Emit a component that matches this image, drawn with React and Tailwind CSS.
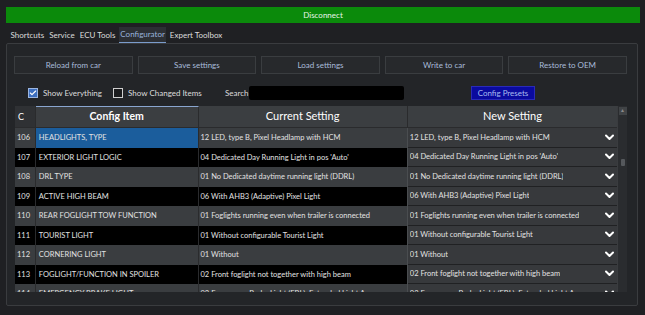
import React from 'react';
import { Check } from 'lucide-react';

const rows = [
  ['106', 'HEADLIGHTS, TYPE', '12 LED, type B, Pixel Headlamp with HCM'],
  ['107', 'EXTERIOR LIGHT LOGIC', "04 Dedicated Day Running Light in pos 'Auto'"],
  ['108', 'DRL TYPE', '01 No Dedicated daytime running light (DDRL)'],
  ['109', 'ACTIVE HIGH BEAM', '06 With AHB3 (Adaptive) Pixel Light'],
  ['110', 'REAR FOGLIGHT TOW FUNCTION', '01 Foglights running even when trailer is connected'],
  ['111', 'TOURIST LIGHT', '01 Without configurable Tourist Light'],
  ['112', 'CORNERING LIGHT', '01 Without'],
  ['113', 'FOGLIGHT/FUNCTION IN SPOILER', '02 Front foglight not together with high beam'],
  ['114', 'EMERGENCY BRAKE LIGHT', '02 Emergency Brake Light (EBL), Extended Light Area'],
];

const tabs = ['Shortcuts', 'Service', 'ECU Tools', 'Configurator', 'Expert Toolbox'];
const actions = ['Reload from car', 'Save settings', 'Load settings', 'Write to car', 'Restore to OEM'];

// combo box arrow
function Chevron() {
  return (
    <svg width="9" height="7" viewBox="0 0 9 7" className="shrink-0">
      <polyline points="1,1.5 4.5,5 8,1.5" fill="none" stroke="#fff" strokeWidth="2" strokeLinecap="round" strokeLinejoin="round" />
    </svg>
  );
}

function Row({ row, index }) {
  const dark = index % 2 === 1;
  const bg = dark ? 'bg-black' : 'bg-[#3a3d40]';
  return (
    <div className="flex h-[19.5px] shrink-0 text-[7.5px] text-[#e2e2e2] leading-none">
      <div className={`w-[21px] flex items-center pl-[2px] border-r border-[#2a2b2d] ${bg}`}>{row[0]}</div>
      <div className={`w-[164px] flex items-center pl-[3px] border-r border-[#2a2b2d] whitespace-nowrap overflow-hidden ${index === 0 ? 'bg-[#1b5d9c]' : bg}`}>{row[1]}</div>
      <div className={`w-[211px] flex items-center pl-[2px] border-r border-[#4a4d50] whitespace-nowrap overflow-hidden ${bg}`}>{row[2]}</div>
      <div className="w-[211px] flex items-center justify-between gap-[4px] pl-[2px] pr-[3px] bg-[#37393c] border-b border-[#202123] whitespace-nowrap overflow-hidden">
        <span className="overflow-hidden">{row[2]}</span>
        <Chevron />
      </div>
    </div>
  );
}

export default function App() {
  return (
    <div className="w-[645px] h-[315px] bg-[#1f2023] px-[6px] pt-[7px] overflow-hidden" style={{ fontFamily: 'Lato, "Noto Sans", sans-serif' }}>
      <div className="h-[16px] bg-[#0b8a0b] flex items-center justify-center text-[8px] text-[#e8f5e8] w-[634px]">Disconnect</div>

      <div className="flex items-end h-[20px] pl-[3px] gap-[2px] text-[8px] text-[#dcdcdc]">
        {tabs.map((t) => (
          <div key={t} className={`px-[1.5px] pb-[2px] pt-[1px] ${t === 'Configurator' ? 'bg-[#2c2f34] text-[#9ab4dc] border-b-[1.5px] border-[#7a9ccc]' : ''}`}>{t}</div>
        ))}
      </div>

      <div className="w-[632px] h-[263px] border border-[#3a3c3f] rounded-[2px] bg-[#232528] flex flex-col pl-[7px] pr-[10px]">
        <div className="grid grid-cols-5 gap-[5px] mt-[12px] h-[18px]">
          {actions.map((a) => (
            <div key={a} className="border border-[#3a3d40] bg-[#27292c] flex items-center justify-center text-[8px] text-[#a9bcda]">{a}</div>
          ))}
        </div>

        <div className="flex items-center h-[15px] mt-[11px] text-[8px] text-[#dcdcdc]">
          <div className="ml-[14px] w-[10px] h-[10px] bg-[#3d6fbf] border border-[#9cb6e0] flex items-center justify-center">
            <Check size={8} strokeWidth={3.5} className="text-white" />
          </div>
          <span className="ml-[5px] w-[70px]">Show Everything</span>
          <div className="w-[10px] h-[10px] border border-[#cfcfcf] bg-[#1a1b1d]" />
          <span className="ml-[5px] w-[97px]">Show Changed Items</span>
          <span className="w-[24px]">Search</span>
          <div className="w-[155px] h-[14px] bg-black rounded-[2px]" />
          <div className="ml-[67px] w-[64px] h-[14px] bg-[#0a0a9e] border border-[#2a2ab8] flex items-center justify-center text-[8px] text-[#a9bcf0]">Config Presets</div>
        </div>

        <div className="mt-[6px] ml-[1px] flex h-[186px] overflow-hidden">
          <div className="flex flex-col w-[607px] overflow-hidden">
            <div className="flex h-[22px] shrink-0 bg-[#3b3e41] text-white border-b border-[#2a2b2d]">
              <div className="w-[21px] flex items-center pl-[3px] text-[9px] border-r border-[#2a2b2d] bg-[#2f3134]">C</div>
              <div className="w-[164px] flex items-center justify-center text-[10.5px] font-bold border-r border-[#2a2b2d] border-t-[1.5px] border-t-[#8aa6d0]">Config Item</div>
              <div className="w-[211px] flex items-center justify-center text-[11px] border-r border-[#2a2b2d]">Current Setting</div>
              <div className="w-[211px] flex items-center justify-center text-[11px]">New Setting</div>
            </div>
            {rows.map((r, i) => (
              <Row key={r[0]} row={r} index={i} />
            ))}
          </div>
          <div className="w-[10px] bg-[#2a2c2f] border-l border-[#3a3c3f] flex flex-col items-center">
            <div className="w-[8px] h-[8px] mt-[1px] bg-[#404346] flex items-center justify-center text-[5px] text-[#8a8a8a]">▲</div>
            <div className="w-[4px] h-[7px] mt-[44px] bg-[#55585c] rounded-[1px]" />
          </div>
        </div>
      </div>
    </div>
  );
}
